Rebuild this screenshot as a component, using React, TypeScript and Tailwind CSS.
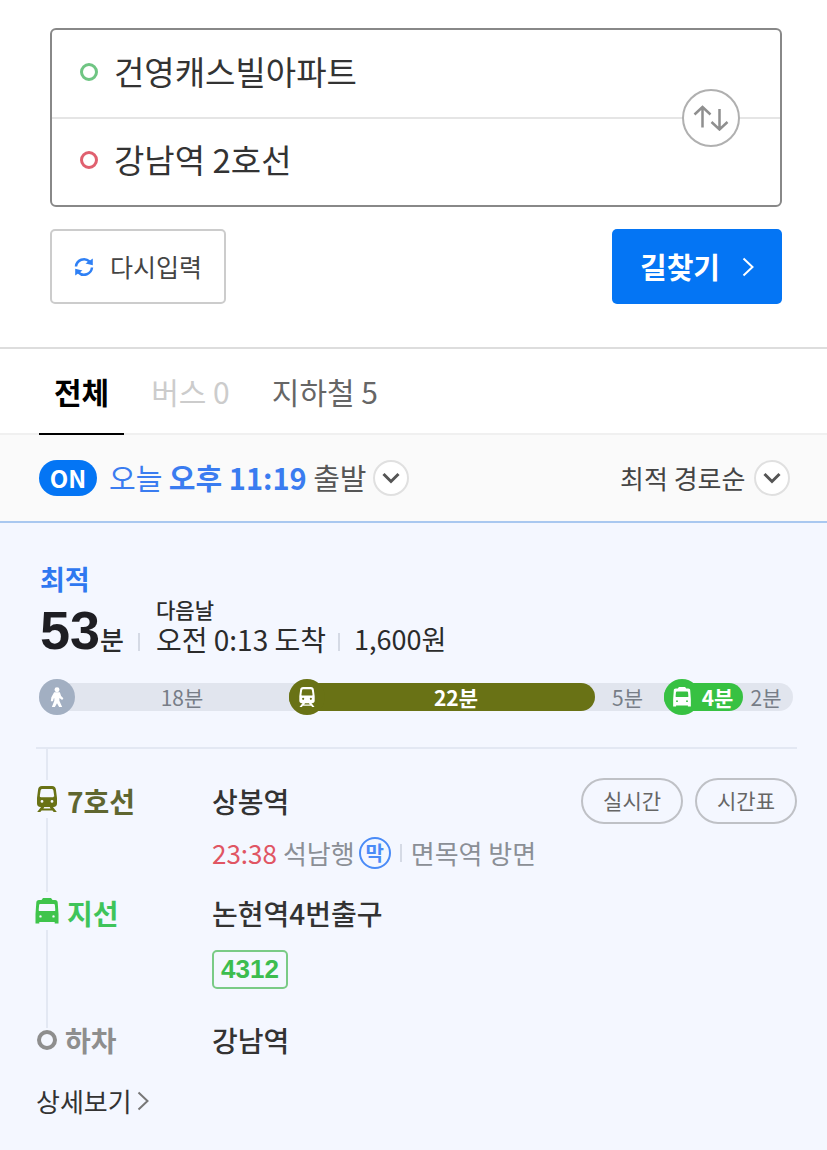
import React, { useState } from 'react';

type IconProps = { className?: string };

const WalkIcon: React.FC<IconProps> = ({ className }) => (
  <svg viewBox="0 0 14 22" fill="currentColor" className={className} aria-hidden="true">
    <circle cx="7" cy="2.800" r="2.600" />
    <path d="M4 5.600h6l1.300 3.900 2.400 2.300-1.300 1.800-2.900-2.200v3l2.900 6.600H9.200L7 17l-2.200 4H1.600l2.600-6.600v-3l-.8 1-.5 2.400H.5l.6-4z" />
  </svg>
);

const TrainIcon: React.FC<IconProps> = ({ className }) => (
  <svg viewBox="0 0 20 26" fill="currentColor" className={className} aria-hidden="true">
    <path
      fillRule="evenodd"
      d="M5 0h10c2.500 0 3.600 1.200 3.900 3.500L20 12v5.500c0 2.300-1.300 3.500-3.500 3.500h-13C1.300 21 0 19.800 0 17.500V12l1.100-8.500C1.400 1.200 2.500 0 5 0zM5.500 3c-1.200 0-1.700.6-1.900 1.600L2.800 10c0 .8.400 1.200 1.200 1.200h12c.8 0 1.200-.4 1.200-1.200l-.8-5.400c-.2-1-.7-1.600-1.900-1.600zM5 14a1.400 1.400 0 1 0 0 2.800 1.400 1.400 0 0 0 0-2.800zM15 14a1.400 1.400 0 1 0 0 2.800 1.400 1.400 0 0 0 0-2.800z"
    />
    <path d="M4.800 20h3l-1.400 2.600h7.200L12.200 20h3l4.600 6h-3.100l-1.300-1.600H4.600L3.300 26H.2z" />
  </svg>
);

const BusIcon: React.FC<IconProps> = ({ className }) => (
  <svg viewBox="0 0 24 26" fill="currentColor" className={className} aria-hidden="true">
    <path
      fillRule="evenodd"
      d="M8 0h8l1.500 2H20c1.800 0 2.600.9 2.700 2.500L23.500 16v9.500h-3.800V24H4.300v1.500H.5V16l.8-11.500C1.400 2.900 2.200 2 4 2h2.500zM5.500 6c-.9 0-1.300.5-1.400 1.300l-.4 4.600c0 .8.400 1.200 1.200 1.200h14.200c.8 0 1.200-.4 1.200-1.200l-.4-4.600c-.1-.8-.5-1.300-1.400-1.300zM5.500 17.200a1.200 1.200 0 1 0 0 2.400 1.200 1.200 0 0 0 0-2.400zM18.500 17.200a1.200 1.200 0 1 0 0 2.400 1.200 1.200 0 0 0 0-2.400z"
    />
  </svg>
);

const RefreshIcon: React.FC<IconProps> = ({ className }) => (
  <svg viewBox="0 0 20 20" fill="none" stroke="currentColor" strokeWidth="2.500" className={className} aria-hidden="true">
    <path d="M2 9.500A8 8 0 0 1 15.500 4.500" />
    <path d="M18 10.500A8 8 0 0 1 4.500 15.500" />
    <path d="M18.800 1.500v6.800L11.500 6.500zM1.200 18.500v-6.800l7.300 1.800z" fill="currentColor" stroke="none" />
  </svg>
);

const SwapIcon: React.FC<IconProps> = ({ className }) => (
  <svg viewBox="0 0 36 26" fill="none" stroke="currentColor" strokeWidth="2.500" className={className} aria-hidden="true">
    <path d="M9.500 22.500V2M1.500 9.500l8-7.500 8 7.500" />
    <path d="M26.500 4v20.500M18.500 17l8 7.500 8-7.500" />
  </svg>
);

const ChevronRightIcon: React.FC<IconProps> = ({ className }) => (
  <svg viewBox="0 0 12 20" fill="none" stroke="currentColor" strokeWidth="2" className={className} aria-hidden="true">
    <path d="M1.500 1.500l9 8.500-9 8.500" />
  </svg>
);

const CircleChevron: React.FC = () => (
  <span className="flex h-9 w-9 shrink-0 items-center justify-center rounded-full border-2 border-[#e0e0e0] bg-white text-[#555]">
    <svg viewBox="0 0 18 12" fill="none" stroke="currentColor" strokeWidth="3" className="h-3 w-[18px]" aria-hidden="true">
      <path d="M1.500 2L9 9.500 16.500 2" />
    </svg>
  </span>
);

interface Segment {
  label: string;
  size: number;
  kind: 'walk' | 'train' | 'bus' | 'plain';
}

const segments: Segment[] = [
  { label: '18분', size: 250, kind: 'walk' },
  { label: '22분', size: 306, kind: 'train' },
  { label: '5분', size: 69, kind: 'plain' },
  { label: '4분', size: 79, kind: 'bus' },
  { label: '2분', size: 50, kind: 'plain' },
];

const segmentStyles = {
  walk: { bar: 'text-[#777d87]', circle: 'bg-[#a2afc2]', icon: <WalkIcon className="h-[21px] w-[14px]" /> },
  train: { bar: 'rounded-full bg-[#697215] pr-2 font-bold text-white', circle: 'bg-[#697215]', icon: <TrainIcon className="h-5 w-4" /> },
  bus: { bar: 'rounded-full bg-[#37c142] pr-2 font-bold text-white', circle: 'bg-[#37c142]', icon: <BusIcon className="h-5 w-5" /> },
  plain: { bar: 'pr-1 text-[#777d87]', circle: '', icon: null },
};

const RouteBar: React.FC = () => (
  <div className="ml-[3px] mr-1 mt-6 flex h-7 rounded-full bg-[#e1e5ee]">
    {segments.map((segment) => {
      const style = segmentStyles[segment.kind];
      return (
        <div
          key={segment.label}
          style={{ flexGrow: segment.size }}
          className="flex min-w-0 basis-0"
        >
          <div className={`flex flex-1 items-center text-[21px] leading-7 ${style.bar}`}>
            {style.icon && (
              <span className={`-my-1 flex h-9 w-9 shrink-0 items-center justify-center rounded-full text-white ${style.circle}`}>
                {style.icon}
              </span>
            )}
            <span className="flex-1 text-center">{segment.label}</span>
          </div>
        </div>
      );
    })}
  </div>
);

interface StepProps {
  icon: React.ReactNode;
  name: string;
  nameClass: string;
  children: React.ReactNode;
}

const Step: React.FC<StepProps> = ({ icon, name, nameClass, children }) => (
  <li className="flex">
    <div className="flex w-[22px] shrink-0 flex-col items-center">
      <span className="flex h-[38px] items-center">{icon}</span>
      <span className="w-[2px] flex-1 bg-[#e3e8f3]" />
    </div>
    <strong className={`ml-[9px] w-[145px] shrink-0 text-[28px] font-bold leading-[42px] ${nameClass}`}>{name}</strong>
    <div className="flex-1">{children}</div>
  </li>
);

const tabs = [
  { label: '전체', disabled: false },
  { label: '버스 0', disabled: true },
  { label: '지하철 5', disabled: false },
];

export default function App() {
  const [start, setStart] = useState('건영캐스빌아파트');
  const [goal, setGoal] = useState('강남역 2호선');
  const [activeTab, setActiveTab] = useState('전체');

  const swap = () => {
    setStart(goal);
    setGoal(start);
  };

  const reset = () => {
    setStart('');
    setGoal('');
  };

  return (
    <div className="flex min-h-screen flex-col bg-white font-['Noto_Sans_CJK_KR',sans-serif] text-[#333]">
      {/* Search form */}
      <form className="pb-[43px] pl-[50px] pr-[45px] pt-7" onSubmit={(e) => e.preventDefault()}>
        <div className="relative rounded-md border-2 border-[#888]">
          <label className="flex h-[89px] items-center border-b-2 border-[#e5e5e5] pb-1 pl-7">
            <span className="h-[18px] w-[18px] shrink-0 rounded-full border-[3px] border-[#6fc583]" />
            <input
              aria-label="출발지"
              value={start}
              onChange={(e) => setStart(e.target.value)}
              className="ml-4 h-12 min-w-0 flex-1 bg-transparent text-[33px] outline-none"
            />
          </label>
          <label className="flex h-[86px] items-center pb-1 pl-7">
            <span className="h-[18px] w-[18px] shrink-0 rounded-full border-[3px] border-[#e0606f]" />
            <input
              aria-label="도착지"
              value={goal}
              onChange={(e) => setGoal(e.target.value)}
              className="ml-4 h-12 min-w-0 flex-1 bg-transparent text-[33px] outline-none"
            />
          </label>
          <button
            type="button"
            onClick={swap}
            aria-label="출발지와 도착지 바꾸기"
            className="absolute right-10 top-1/2 flex h-[58px] w-[58px] -translate-y-1/2 items-center justify-center rounded-full border-2 border-[#b0b0b0] bg-white text-[#8f8f8f]"
          >
            <SwapIcon className="h-[26px] w-9" />
          </button>
        </div>
        <div className="mt-[22px] flex justify-between">
          <button
            type="button"
            onClick={reset}
            className="flex h-[75px] items-center rounded-[5px] border-2 border-[#ccc] px-[22px] text-[25px] text-[#444]"
          >
            <RefreshIcon className="mr-4 h-5 w-5 text-[#2f80f5]" />
            다시입력
          </button>
          <button
            type="submit"
            className="flex h-[75px] items-center rounded-[5px] bg-[#0475f4] px-7 text-[29px] font-bold text-white"
          >
            길찾기
            <ChevronRightIcon className="ml-[22px] h-5 w-3" />
          </button>
        </div>
      </form>

      {/* Transport tabs */}
      <div role="tablist" className="flex gap-3 border-b-2 border-t-2 border-b-[#f0f0f0] border-t-[#ddd] pl-[39px]">
        {tabs.map((tab) => (
          <button
            key={tab.label}
            type="button"
            role="tab"
            aria-selected={tab.label === activeTab}
            disabled={tab.disabled}
            onClick={() => setActiveTab(tab.label)}
            className={`-mb-[2px] h-[86px] border-b-2 px-[15px] text-[30px] ${
              tab.label === activeTab
                ? 'border-black font-bold text-black'
                : tab.disabled
                  ? 'border-transparent text-[#ccc]'
                  : 'border-transparent text-[#666]'
            }`}
          >
            {tab.label}
          </button>
        ))}
      </div>

      {/* Departure time and sort order */}
      <div className="flex h-[88px] items-center justify-between border-b-2 border-[#a9c8f0] bg-[#fafafa] pl-[39px] pr-[37px]">
        <button type="button" className="flex items-center text-[29px] text-[#555]">
          <span className="mr-3 flex h-9 w-[58px] items-center justify-center rounded-full bg-[#0475f4] text-2xl font-bold text-white">
            ON
          </span>
          <span>
            <span className="text-[#3a7cf0]">
              오늘 <b>오후 11:19</b>
            </span>{' '}
            출발
          </span>
          <span className="ml-[6px]">
            <CircleChevron />
          </span>
        </button>
        <label className="flex items-center">
          <select aria-label="정렬" className="mr-2 h-10 appearance-none bg-transparent pb-1 text-[26px] text-[#444]">
            <option>최적 경로순</option>
          </select>
          <CircleChevron />
        </label>
      </div>

      {/* Best route */}
      <section className="flex-1 bg-[#f4f7ff] pb-8 pl-9 pr-[30px] pt-9">
        <h2 className="ml-1 text-[27px] font-bold leading-10 text-[#2f78f0]">최적</h2>
        <div className="ml-1 flex items-end text-[#2b2b2b]">
          <strong className="font-['Liberation_Sans',sans-serif] text-[54px] leading-[58px] text-[#1e1e23]">53</strong>
          <span className="text-[26px] font-medium leading-10">분</span>
          <span className="mb-2 ml-[14px] h-[18px] w-[2px] bg-[#d5dae5]" />
          <div className="ml-4">
            <div className="text-[21px] font-medium leading-5">다음날</div>
            <div className="text-[28px] leading-10">오전 0:13 도착</div>
          </div>
          <span className="mb-2 ml-3 h-[18px] w-[2px] bg-[#d5dae5]" />
          <span className="ml-[14px] text-[27px] leading-10">1,600원</span>
        </div>
        <RouteBar />

        <div className="mt-9 h-[2px] bg-[#e3e8f3]" />
        <div className="ml-[10px] h-[31px] w-[2px] bg-[#e3e8f3]" />
        <ol>
          <Step icon={<TrainIcon className="h-[26px] w-5 text-[#697215]" />} name="7호선" nameClass="text-[#5f6630]">
            <div className="flex h-[112px] justify-between">
              <div>
                <div className="text-[28px] font-medium leading-[42px]">상봉역</div>
                <div className="mt-[10px] flex items-center text-[26px] leading-[42px] text-[#8b8f96]">
                  <span className="mr-[6px] text-[#e05563]">23:38</span>
                  석남행
                  <span className="ml-1 flex h-8 w-8 items-center justify-center rounded-full border-2 border-[#4a8bf7] text-xl font-bold text-[#4a8bf7]">
                    막
                  </span>
                  <span className="mx-[9px] h-[18px] w-[2px] bg-[#d5dae5]" />
                  면목역 방면
                </div>
              </div>
              <div className="flex h-[42px] items-center gap-3 text-[21px] text-[#666]">
                <button type="button" className="h-[46px] rounded-full border-2 border-[#bfc1c6] px-5">
                  실시간
                </button>
                <button type="button" className="h-[46px] rounded-full border-2 border-[#bfc1c6] px-5">
                  시간표
                </button>
              </div>
            </div>
          </Step>
          <Step icon={<BusIcon className="h-[26px] w-6 shrink-0 text-[#3fc44b]" />} name="지선" nameClass="text-[#3fc45a]">
            <div className="h-[136px]">
              <div className="text-[28px] font-medium leading-[42px]">논현역4번출구</div>
              <span className="mt-4 inline-flex h-[39px] items-center rounded-[5px] border-2 border-[#7acb86] px-[7px] font-['Liberation_Sans',sans-serif] text-[26px] font-bold text-[#3dbd4e]">
                4312
              </span>
            </div>
          </Step>
          <li className="flex text-[28px] leading-6">
            <span className="flex w-[22px] shrink-0 items-center justify-center">
              <span className="h-5 w-5 rounded-full border-4 border-[#8e8e8e]" />
            </span>
            <strong className="ml-[7px] w-[147px] shrink-0 font-bold text-[#8e8e8e]">하차</strong>
            <span className="font-medium">강남역</span>
          </li>
        </ol>
        <a href="#detail" className="mt-7 inline-flex items-center text-[26px] leading-[42px]">
          상세보기
          <ChevronRightIcon className="ml-[5px] h-5 w-3 text-[#777]" />
        </a>
      </section>
    </div>
  );
}
